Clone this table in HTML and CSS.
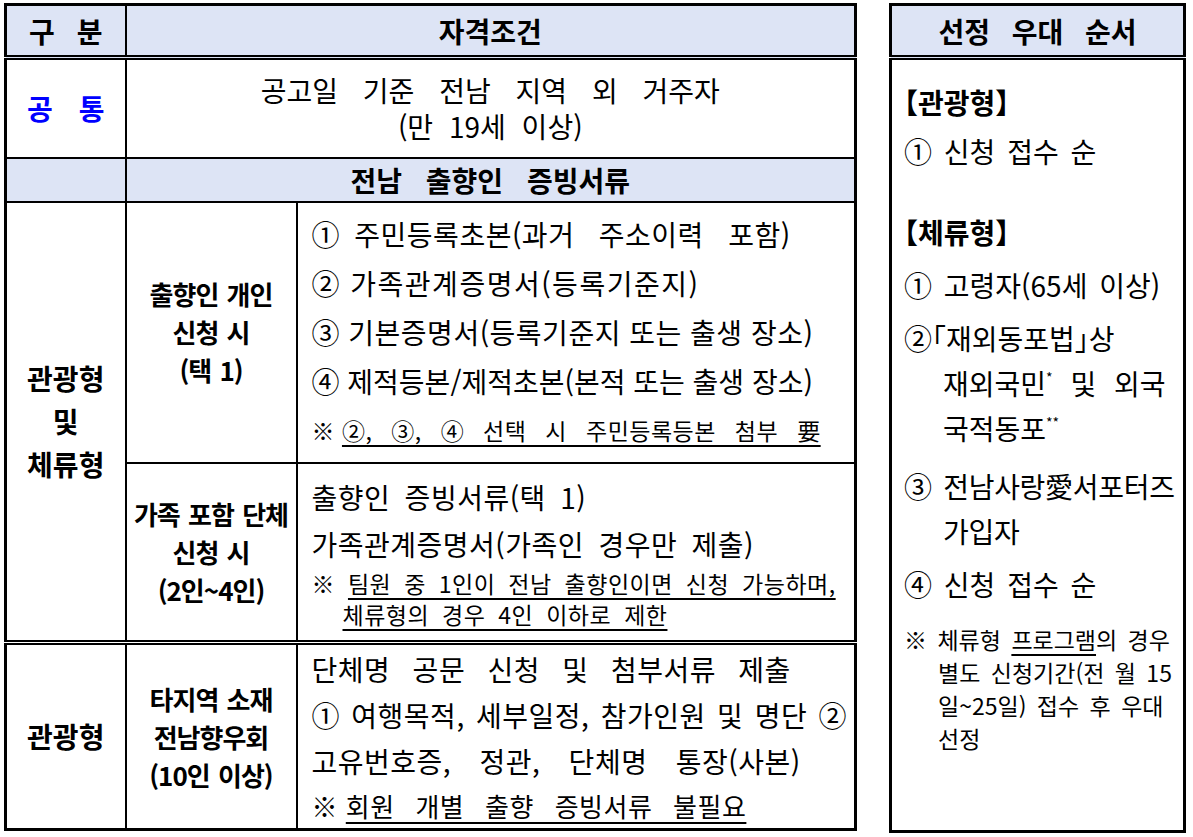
FILE: index.html
```html
<!DOCTYPE html>
<html lang="ko">
<head>
<meta charset="utf-8">
<title>자격조건</title>
<link rel="stylesheet" href="styles.css">
</head>
<body>
<div class="page">
  <table class="main">
    <colgroup><col class="c1"><col class="c2"><col class="c3"></colgroup>
    <thead>
      <tr class="hd"><th>구 분</th><th colspan="2">자격조건</th></tr>
    </thead>
    <tbody>
      <tr class="common">
        <td class="blue">공 통</td>
        <td colspan="2" class="center"><span class="cl1">공고일 기준 전남 지역 외 거주자</span><br><span class="cl2">(만 19세 이상)</span></td>
      </tr>
      <tr class="sub"><td></td><td colspan="2">전남 출향인 증빙서류</td></tr>
      <tr class="ra">
        <td rowspan="2" class="cat">관광형<br>및<br>체류형</td>
        <td class="lab">출향인 개인<br>신청 시<br>(택 1)</td>
        <td class="docs">
          <div class="ln l49"><span class="ws6">① </span>주민등록초본(과거<span class="wsw"> 주소이력 </span>포함)</div>
          <div class="ln l49 lsw">② 가족관계증명서(등록기준지)</div>
          <div class="ln l49">③ 기본증명서(등록기준지 또는 출생 장소)</div>
          <div class="ln l49 ls0">④ 제적등본/제적초본(본적 또는 출생 장소)</div>
          <div class="note l49">※ <u class="na">②, ③, ④ 선택 시 주민등록등본 첨부 要</u></div>
        </td>
      </tr>
      <tr class="rb">
        <td class="lab">가족 포함 단체<br>신청 시<br>(2인~4인)</td>
        <td class="docs">
          <div class="ln l47 ws6">출향인 증빙서류(택 1)</div>
          <div class="ln l47 ws6">가족관계증명서(가족인 경우만 제출)</div>
          <div class="note nb hang l31">※ <u>팀원 중 1인이 전남 출향인이면 신청 가능하며,</u><br><u>체류형의 경우 4인 이하로 제한</u></div>
        </td>
      </tr>
      <tr class="rc">
        <td class="cat">관광형</td>
        <td class="lab">타지역 소재<br>전남향우회<br>(10인 이상)</td>
        <td class="docs">
          <div class="ln l46 ws14">단체명 공문 신청 및 첨부서류 제출</div>
          <div class="ln l46 ws3">① 여행목적, 세부일정, 참가인원 및 명단 ②</div>
          <div class="ln l46 ws20">고유번호증, 정관, 단체명 통장(사본)</div>
          <div class="note2 l43">※ <u class="nc">회원 개별 출향 증빙서류 불필요</u></div>
        </td>
      </tr>
    </tbody>
  </table>

  <table class="side">
    <thead><tr class="hd"><th>선정 우대 순서</th></tr></thead>
    <tbody>
      <tr>
        <td class="pri">
          <div class="sec">【관광형】</div>
          <div class="it m4 ws12">① 신청 접수 순</div>
          <div class="sec m36">【체류형】</div>
          <div class="it m8">① 고령자(65세 이상)</div>
          <div class="it m8 hang2">②<span class="half">「</span>재외동포법<span class="half">」</span>상<br><span class="ws10">재외국민<sup>*</sup> 및 외국</span><br>국적동포<sup>**</sup></div>
          <div class="it m13 hang2 tight">③ 전남사랑愛서포터즈<br>가입자</div>
          <div class="it m8 ws12">④ 신청 접수 순</div>
          <div class="pnote">※ 체류형 <u>프로그램</u>의 경우<br>별도 신청기간(전 월 15<br>일~25일) 접수 후 우대<br>선정</div>
        </td>
      </tr>
    </tbody>
  </table>
</div>
</body>
</html>
```
FILE: styles.css
```css
* { box-sizing: border-box; }
html, body { margin: 0; padding: 0; background: #fff; }
body {
  font-family: "Noto Sans CJK KR", "Noto Sans", sans-serif;
  color: #000;
}
.page {
  display: flex;
  align-items: flex-start;
  gap: 32px;
  padding: 3px 0 0 4px;
}
table { border-collapse: collapse; }
td, th {
  border: 2px solid #000;
  padding: 0;
  vertical-align: middle;
}
.main {
  width: 853px;
  table-layout: fixed;
  border: 3px solid #000;
}
.c1 { width: 120px; }
.c2 { width: 171px; }

.hd th {
  background: #dde4f5;
  font-weight: 700;
  font-size: 28px;
  height: 53px;
  border-bottom: 5px double #000;
  word-spacing: 14px;
}

.common { height: 100px; }
.common .blue {
  color: #0000ff;
  font-weight: 700;
  font-size: 28px;
  text-align: center;
  word-spacing: 18px;
}
.common .center {
  text-align: center;
  font-size: 28px;
  line-height: 36px;
}
.cl1 { word-spacing: 17px; }
.cl2 { word-spacing: 8px; }

.sub { height: 44px; }
.sub td {
  background: #dde4f5;
  text-align: center;
  font-weight: 700;
  font-size: 28px;
  word-spacing: 16px;
}

.ra { height: 261px; }
.rb { height: 180px; }
.rc { height: 187px; }
.rc td { border-top: 5px double #000; }

.cat {
  text-align: center;
  font-weight: 700;
  font-size: 28px;
  line-height: 43px;
}
.lab {
  text-align: center;
  font-weight: 700;
  font-size: 26px;
  line-height: 38px;
  letter-spacing: -1px;
  word-spacing: 2px;
}
.docs {
  padding-left: 14px;
  text-align: left;
}
.ln {
  font-size: 28px;
  letter-spacing: 0.5px;
  word-spacing: 0;
  white-space: nowrap;
}
.wsw { word-spacing: 16px; }
.lsw { letter-spacing: 1.5px; }
.ls0 { letter-spacing: 0; }
.ws3 { word-spacing: 3px; }
.ws6 { word-spacing: 6px; }
.ws10 { word-spacing: 10px; }
.ws12 { word-spacing: 12px; }
.ws14 { word-spacing: 14px; }
.ws20 { word-spacing: 20px; }

.note {
  font-size: 23px;
  letter-spacing: 0.5px;
  white-space: nowrap;
}
.na { word-spacing: 12px; }
.nb { word-spacing: 6px; }
.note2 {
  font-size: 26px;
  letter-spacing: 0.5px;
  white-space: nowrap;
}
.nc { word-spacing: 13px; }
.note u, .note2 u, .pnote u {
  text-underline-offset: 5px;
  text-decoration-thickness: 1.5px;
}
.hang {
  padding-left: 31px;
  text-indent: -31px;
}
.l49 { line-height: 49px; }
.l47 { line-height: 47px; }
.l46 { line-height: 46px; }
.l43 { line-height: 43px; }
.l31 { line-height: 31px; }

.side {
  width: 297px;
  border: 3px solid #000;
}
.side tbody tr { height: 774px; }
.pri {
  vertical-align: top;
  padding: 20px 4px 0 12px;
}
.sec {
  font-weight: 700;
  font-size: 28px;
  line-height: 45px;
  font-feature-settings: "halt" 1;
}
.it {
  font-size: 28px;
  line-height: 45px;
  word-spacing: 4px;
  white-space: nowrap;
}
.it.tight { letter-spacing: -0.3px; }
.half { font-feature-settings: "halt" 1; }
.it sup { font-size: 14px; vertical-align: 12px; line-height: 0; }
.hang2 {
  padding-left: 39px;
  text-indent: -39px;
}
.m4 { margin-top: 4px; }
.m8 { margin-top: 8px; }
.m13 { margin-top: 13px; }
.m36 { margin-top: 36px; }
.pnote {
  margin-top: 16px;
  font-size: 23px;
  line-height: 33px;
  padding-left: 34px;
  text-indent: -34px;
  white-space: nowrap;
  word-spacing: 4px;
}
```
